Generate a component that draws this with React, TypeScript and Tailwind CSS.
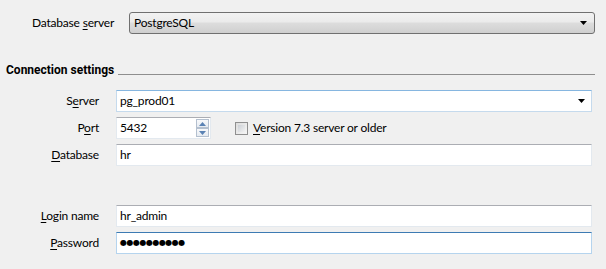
import React from 'react';

const inputBase =
  'h-[22px] flex-1 flex items-center bg-white border border-[#e3e9ef] border-t-[#abadb3] pl-[3px] text-[12px] text-black';

function Arrow() {
  return (
    <svg width="7" height="4" viewBox="0 0 7 4" className="shrink-0">
      <path d="M0 0h7L3.5 4z" fill="#000" />
    </svg>
  );
}

function Label({ text, idx }: { text: string; idx: number }) {
  return (
    <span className="w-[99px] text-right shrink-0">
      {text.slice(0, idx)}
      <span className="underline underline-offset-2">{text.charAt(idx)}</span>
      {text.slice(idx + 1)}
    </span>
  );
}

function SpinButton({ up }: { up: boolean }) {
  return (
    <div className="w-[13px] h-[9px] border border-[#b4c0cf] bg-gradient-to-b from-[#f8f9fb] to-[#e6ebf1] flex items-center justify-center">
      <svg width="7" height="4" viewBox="0 0 7 4">
        <path d={up ? 'M0 4h7L3.5 0z' : 'M0 0h7L3.5 4z'} fill="#5a82b4" />
      </svg>
    </div>
  );
}

export default function App() {
  return (
    <div
      className="w-[606px] h-[269px] bg-[#f0f0f0] text-[12px] text-black tracking-[-0.2px] pt-[12px] flex flex-col"
      style={{ fontFamily: 'Lato, "Liberation Sans", sans-serif' }}
    >
      {/* Database server */}
      <div className="flex items-center pl-[32px] pr-[11px]">
        <span className="w-[97px] shrink-0">
          Database <span className="underline underline-offset-2">s</span>erver
        </span>
        <div className="h-[22px] flex-1 flex items-center justify-between pl-[4px] pr-[7px] rounded-[3px] border border-[#707070] bg-[linear-gradient(to_bottom,#f2f2f2_0%,#ebebeb_45%,#dddddd_50%,#cfcfcf_100%)]">
          <span>PostgreSQL</span>
          <Arrow />
        </div>
      </div>

      {/* Connection settings header */}
      <div className="flex items-center h-[14px] mt-[29px] pl-[6px] pr-[11px]">
        <span className="font-bold tracking-normal" style={{ fontFamily: 'Roboto, sans-serif' }}>
          Connection settings
        </span>
        <div className="flex-1 h-px bg-[#8e8e8e] ml-[4px] mt-[9px]" />
      </div>

      <div className="flex flex-col gap-[5px] mt-[13px] pr-[14px]">
        {/* Server */}
        <div className="flex items-center gap-[17px]">
          <Label text="Server" idx={1} />
          <div className="h-[22px] flex-1 flex items-center justify-between bg-white border border-[#c5daed] border-t-[#86b6e0] pl-[3px] pr-[6px]">
            <span>pg_prod01</span>
            <Arrow />
          </div>
        </div>

        {/* Port */}
        <div className="flex items-center gap-[17px]">
          <Label text="Port" idx={1} />
          <div className="flex items-center flex-1">
            <div className="h-[22px] w-[95px] flex items-center justify-between bg-white border border-[#e3e9ef] border-t-[#abadb3] pl-[3px] pr-[1px]">
              <span>5432</span>
              <div className="flex flex-col">
                <SpinButton up />
                <SpinButton up={false} />
              </div>
            </div>
            <div className="flex items-center ml-[24px] gap-[5px]">
              <div className="w-[13px] h-[13px] border border-[#8f8f8f] bg-gradient-to-br from-[#dcdcdc] to-[#f6f6f6] p-[2px]">
                <div className="w-full h-full bg-gradient-to-br from-[#cbcfd5] to-[#f2f2f2]" />
              </div>
              <span>
                <span className="underline underline-offset-2">V</span>ersion 7.3 server or older
              </span>
            </div>
          </div>
        </div>

        {/* Database */}
        <div className="flex items-center gap-[17px]">
          <Label text="Database" idx={0} />
          <div className={inputBase}>hr</div>
        </div>

        {/* Login name */}
        <div className="flex items-center gap-[17px] mt-[34px]">
          <Label text="Login name" idx={0} />
          <div className={inputBase}>hr_admin</div>
        </div>

        {/* Password */}
        <div className="flex items-center gap-[17px]">
          <Label text="Password" idx={0} />
          <div className="h-[22px] flex-1 flex items-center bg-white border border-[#b5d4ee] border-t-[#3d7bb3] pl-[3px]">
            <span
              className="text-[8px] tracking-[-0.5px] leading-none"
              style={{ fontFamily: '"DejaVu Sans", sans-serif' }}
            >
              ●●●●●●●●●●
            </span>
          </div>
        </div>
      </div>
    </div>
  );
}
